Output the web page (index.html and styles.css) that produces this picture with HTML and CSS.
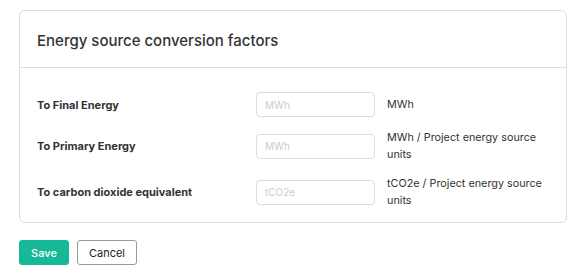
FILE: index.html
```html
<!DOCTYPE html>
<html lang="en">
<head>
    <meta charset="UTF-8">
    <meta name="viewport" content="width=device-width, initial-scale=1.0">
    <title>Energy source conversion factors</title>
    <link rel="stylesheet" href="styles.css">
</head>
<body>
    <div class="card">
        <div class="card-header">
            <h2>Energy source conversion factors</h2>
        </div>
        <div class="card-body">
            <div class="form-row">
                <label for="final-energy">To Final Energy</label>
                <input type="text" id="final-energy" placeholder="MWh">
                <span class="unit">MWh</span>
            </div>
            <div class="form-row">
                <label for="primary-energy">To Primary Energy</label>
                <input type="text" id="primary-energy" placeholder="MWh">
                <span class="unit">MWh / Project energy source units</span>
            </div>
            <div class="form-row">
                <label for="co2e">To carbon dioxide equivalent</label>
                <input type="text" id="co2e" placeholder="tCO2e">
                <span class="unit">tCO2e / Project energy source units</span>
            </div>
        </div>
    </div>

    <div class="actions">
        <button class="btn btn-primary">Save</button>
        <button class="btn btn-default">Cancel</button>
    </div>
</body>
</html>
```

FILE: styles.css
```css
* {
    box-sizing: border-box;
    margin: 0;
    padding: 0;
}

body {
    font-family: Inter, 'Noto Sans', sans-serif;
    color: #333;
    background: #fff;
    padding: 10px 18px 0 19px;
    font-size: 11px;
}

.card {
    border: 1px solid #ddd;
    border-radius: 6px;
}

.card-header {
    height: 57px;
    padding: 0 17px;
    display: flex;
    align-items: center;
    border-bottom: 1px solid #ddd;
}

.card-header h2 {
    font-size: 15px;
    font-weight: 500;
    color: #333;
    padding-top: 3px;
}

.card-body {
    padding: 24px 17px 13px;
    display: flex;
    flex-direction: column;
    gap: 12px;
}

.form-row {
    display: grid;
    grid-template-columns: 207px 119px 1fr;
    column-gap: 12px;
    align-items: center;
}

.form-row label {
    font-weight: 700;
    font-size: 11px;
    color: #333;
}

.form-row input {
    height: 25px;
    border: 1px solid #ddd;
    border-radius: 4px;
    padding: 0 8px;
    font-family: inherit;
    font-size: 10px;
    color: #333;
}

.form-row input::placeholder {
    color: #ccc;
}

.unit {
    font-size: 10.8px;
    line-height: 17px;
    color: #333;
}

.actions {
    margin-top: 17px;
    display: flex;
    gap: 8px;
}

.btn {
    height: 25px;
    border-radius: 3px;
    font-family: inherit;
    font-size: 11px;
    cursor: pointer;
}

.btn-primary {
    width: 50px;
    background: #17b898;
    border: 1px solid #17b898;
    color: #fff;
    font-weight: 500;
}

.btn-default {
    width: 60px;
    background: #fff;
    border: 1px solid #999;
    color: #222;
}
```
